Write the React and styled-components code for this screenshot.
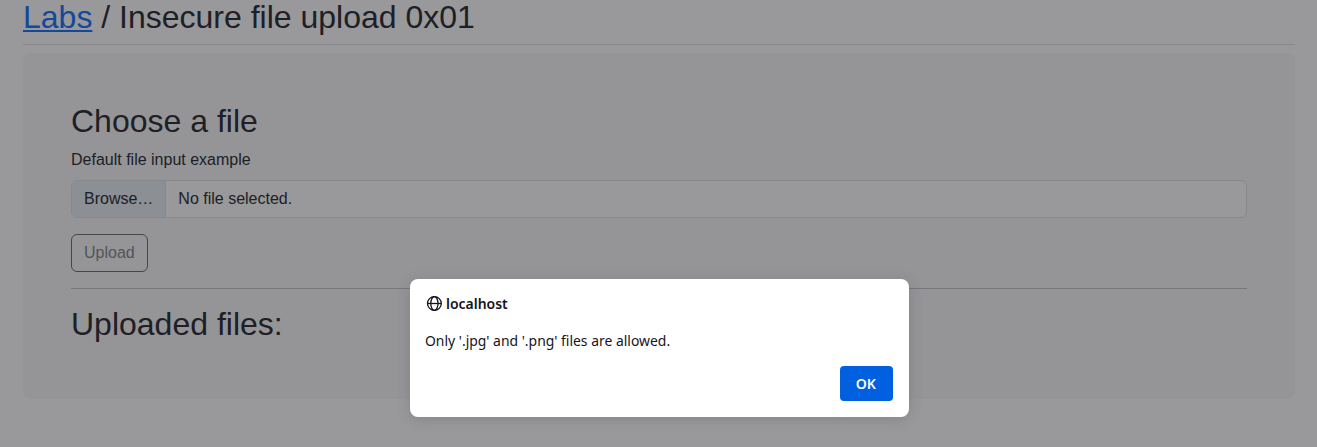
import React from "react";
import styled, { createGlobalStyle } from "styled-components";

const GlobalStyle = createGlobalStyle`
  * { box-sizing: border-box; }
  body {
    margin: 0;
    overflow: hidden;
    background: #fff;
    color: #212529;
    font: 400 16px/1.5 "Liberation Sans", Arial, sans-serif;
  }
`;

const Page = styled.main`
  height: 447px;
  padding: 0 22px 0 23px;
  overflow: hidden;
`;

const PageTitle = styled.h2`
  margin: -2px 0 0;
  padding-bottom: 8px;
  border-bottom: 1px solid #dee2e6;
  font-size: 32px;
  font-weight: 500;
  line-height: 38px;
`;

const LabsLink = styled.a`
  color: #0d6efd;
  text-decoration: underline;
  text-decoration-thickness: 2px;
  text-underline-offset: 2px;
`;

const Divider = styled.hr`
  margin: 16px 0;
  border: 0;
  border-top: 1px solid #212529;
  opacity: 0.25;
`;

const Panel = styled.section`
  height: 346px;
  margin-top: 8px;
  padding: 49px 48px 48px;
  background: #f8f9fa;
  border-radius: 8px;
`;

const Heading = styled.h2`
  margin: 0 0 8px;
  font-size: 32px;
  font-weight: 500;
  line-height: 38.4px;
`;

const Label = styled.label`
  display: block;
  margin-bottom: 8px;
`;

const FileField = styled.div`
  display: flex;
  height: 38px;
  margin-bottom: 16px;
  overflow: hidden;
  background: #fff;
  border: 1px solid #dee2e6;
  border-radius: 6px;
`;

const Browse = styled.span`
  padding: 6px 12px;
  background: #e7eef2;
  border-right: 1px solid #dee2e6;
`;

const FileName = styled.span`
  padding: 6px 12px;
`;

const UploadButton = styled.button`
  display: block;
  height: 38px;
  margin-bottom: 16px;
  padding: 6px 12px;
  color: #7d858c;
  background: transparent;
  border: 1px solid #696b70;
  border-radius: 6px;
  font: inherit;
`;

const Overlay = styled.div`
  position: absolute;
  inset: 0;
  display: flex;
  justify-content: center;
  align-items: flex-start;
  padding: 279px 0 0 2px;
  background: rgba(28, 27, 34, 0.45);
`;

const Dialog = styled.div`
  width: 499px;
  height: 138px;
  padding: 15px 16px 16px;
  color: #15141a;
  background: #fff;
  border-radius: 8px;
  box-shadow: 0 2px 14px rgba(58, 57, 68, 0.2);
  font: 15px/18px "Noto Sans", sans-serif;
`;

const DialogHeader = styled.header`
  display: flex;
  align-items: center;
  gap: 4px;
  height: 17px;
  font-weight: 600;
`;

const Condensed = styled.span`
  display: inline-block;
  transform: scaleX(${({ $ratio }) => $ratio});
  transform-origin: ${({ $origin }) => $origin || "left"};
`;

const Message = styled.p`
  margin: 20px 0 16px -1px;
  line-height: 19px;
`;

const Actions = styled.div`
  display: flex;
  justify-content: flex-end;
`;

const OkButton = styled.button`
  width: 53px;
  height: 35px;
  padding: 0 1px 2px 0;
  color: #fbfbfe;
  background: #0060df;
  border: 0;
  border-radius: 4px;
  font: 600 15px "Noto Sans", sans-serif;
`;

const GlobeIcon = styled.svg`
  flex: none;
`;

const Globe = () => (
  <GlobeIcon width="16" height="16" viewBox="0 0 16 16" fill="none" stroke="currentColor" strokeWidth="1.3">
    <circle cx="8.4" cy="8.5" r="6.9" />
    <ellipse cx="8.4" cy="8.5" rx="3.6" ry="6.9" />
    <path d="M1.5 8.5h13.8" />
  </GlobeIcon>
);

export default function App() {
  return (
    <>
      <GlobalStyle />
      <Page>
        <PageTitle><LabsLink>Labs</LabsLink> / Insecure file upload 0x01</PageTitle>
        <Panel>
          <Heading>Choose a file</Heading>
          <Label>Default file input example</Label>
          <FileField>
            <Browse>Browse…</Browse>
            <FileName>No file selected.</FileName>
          </FileField>
          <UploadButton disabled>Upload</UploadButton>
          <Divider />
          <Heading>Uploaded files:</Heading>
        </Panel>
      </Page>
      <Overlay>
        <Dialog role="dialog">
          <DialogHeader><Globe /><Condensed $ratio={0.93}>localhost</Condensed></DialogHeader>
          <Message><Condensed $ratio={0.928}>Only '.jpg' and '.png' files are allowed.</Condensed></Message>
          <Actions><OkButton><Condensed $ratio={0.94} $origin="center">OK</Condensed></OkButton></Actions>
        </Dialog>
      </Overlay>
    </>
  );
}
